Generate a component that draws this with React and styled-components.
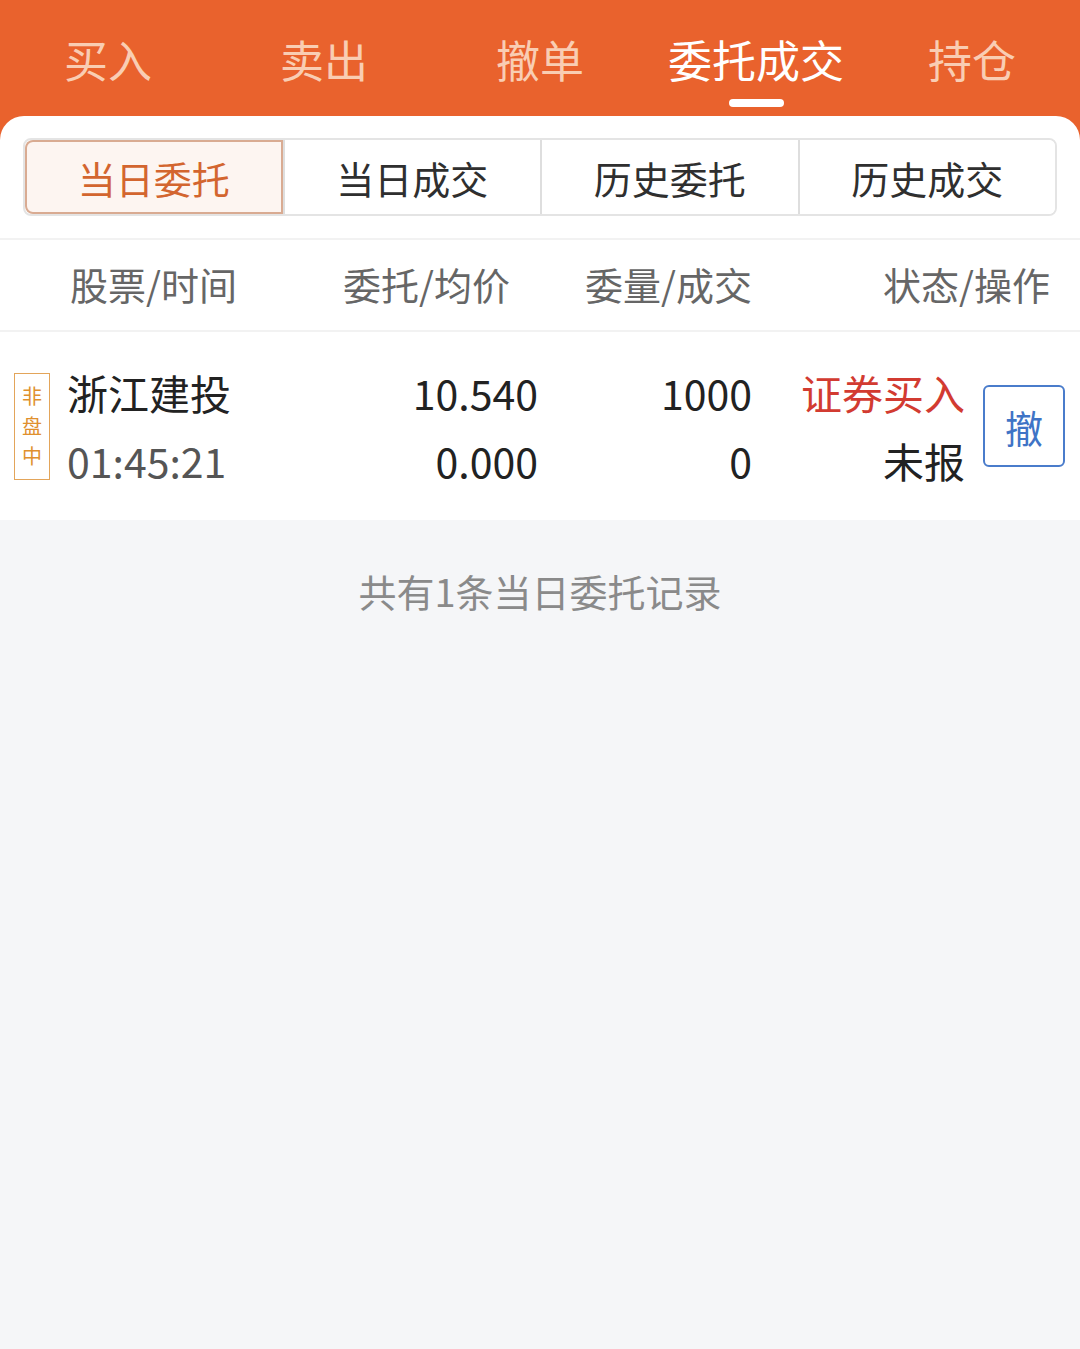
import React, { useState } from 'react';
import styled, { createGlobalStyle } from 'styled-components';

const GlobalStyle = createGlobalStyle`
  html, body {
    margin: 0;
    padding: 0;
    background: #f5f6f8;
    font-family: "Noto Sans CJK SC", "Noto Sans", sans-serif;
  }
`;

const topTabs = ['买入', '卖出', '撤单', '委托成交', '持仓'];
const subTabs = ['当日委托', '当日成交', '历史委托', '历史成交'];

const App = () => {
  const [tab, setTab] = useState(3);
  const [sub, setSub] = useState(0);

  return (
    <Page>
      <GlobalStyle />
      <TopBar>
        {topTabs.map((t, i) => (
          <TopTab key={t} $active={i === tab} onClick={() => setTab(i)}>
            {t}
          </TopTab>
        ))}
      </TopBar>
      <Card>
        <SegWrap>
          <Segmented>
            {subTabs.map((t, i) => (
              <Seg key={t} $active={i === sub} onClick={() => setSub(i)}>
                {t}
              </Seg>
            ))}
          </Segmented>
        </SegWrap>
        <HeadRow>
          <HeadCell $w="270px" $align="left" $pl="70px">股票/时间</HeadCell>
          <HeadCell $w="240px">委托/均价</HeadCell>
          <HeadCell $w="242px">委量/成交</HeadCell>
          <HeadCell $flex $pr="30px">状态/操作</HeadCell>
        </HeadRow>
        <DataRow>
          <Badge>
            <span>非</span>
            <span>盘</span>
            <span>中</span>
          </Badge>
          <Stack $pl="17px">
            <Name>浙江建投</Name>
            <Time>01:45:21</Time>
          </Stack>
          <Stack $right>
            <Num>10.540</Num>
            <Num>0.000</Num>
          </Stack>
          <Stack $right>
            <Num>1000</Num>
            <Num>0</Num>
          </Stack>
          <Stack $right>
            <Status $color="#d23b31">证券买入</Status>
            <Status>未报</Status>
          </Stack>
          <BtnCell>
            <CancelBtn>撤</CancelBtn>
          </BtnCell>
        </DataRow>
      </Card>
      <Footer>共有1条当日委托记录</Footer>
    </Page>
  );
};

export default App;

const Page = styled.div`
  width: 1080px;
  min-height: 1349px;
  background: #f5f6f8;
`;

const TopBar = styled.div`
  display: grid;
  grid-template-columns: repeat(5, 1fr);
  background: #e9622d;
  height: 140px;
  margin-bottom: -24px;
`;

const TopTab = styled.div`
  position: relative;
  text-align: center;
  font-size: 44px;
  line-height: 44px;
  padding-top: 37px;
  color: ${p => (p.$active ? '#ffffff' : '#f9cdb3')};
  cursor: pointer;

  &::after {
    content: '';
    display: ${p => (p.$active ? 'block' : 'none')};
    position: absolute;
    left: 50%;
    top: 99px;
    width: 55px;
    height: 8px;
    margin-left: -27px;
    border-radius: 4px;
    background: #ffffff;
  }
`;

const Card = styled.div`
  position: relative;
  background: #ffffff;
  border-radius: 24px 24px 0 0;
`;

const SegWrap = styled.div`
  padding: 22px 23px 22px;
  border-bottom: 2px solid #f2f2f2;
`;

const Segmented = styled.div`
  display: grid;
  grid-template-columns: repeat(4, 1fr);
  box-sizing: border-box;
  height: 78px;
  border: 2px solid #e4e4e4;
  border-radius: 8px;
  overflow: hidden;
`;

const Seg = styled.div`
  display: flex;
  align-items: center;
  justify-content: center;
  font-size: 38px;
  color: ${p => (p.$active ? '#d3652f' : '#2f2f2f')};
  background: ${p => (p.$active ? '#fdf5f1' : '#ffffff')};
  border-left: 2px solid ${p => (p.$active ? '#c99a80' : '#dedede')};
  box-shadow: ${p => (p.$active ? 'inset 0 0 0 2px #d9ab92' : 'none')};
  border-radius: ${p => (p.$active ? '8px 0 0 8px' : '0')};
  cursor: pointer;

  &:first-child {
    border-left: none;
  }
`;

const HeadRow = styled.div`
  display: flex;
  align-items: center;
  box-sizing: border-box;
  height: 92px;
  padding-bottom: 4px;
  border-bottom: 2px solid #f2f2f2;
`;

const HeadCell = styled.div`
  ${p => (p.$flex ? 'flex: 1;' : `width: ${p.$w};`)}
  box-sizing: border-box;
  padding-left: ${p => p.$pl || '0'};
  padding-right: ${p => p.$pr || '0'};
  text-align: ${p => p.$align || 'right'};
  font-size: 38px;
  color: #666666;
`;

const DataRow = styled.div`
  display: grid;
  grid-template-columns: 36px 230px 258px 214px 213px 100px;
  align-items: center;
  height: 188px;
  padding: 0 15px 0 14px;
`;

const Badge = styled.div`
  display: flex;
  flex-direction: column;
  align-items: center;
  justify-content: center;
  box-sizing: border-box;
  width: 36px;
  height: 107px;
  border: 1.5px solid #e3a55a;
  font-size: 20px;
  line-height: 30px;
  color: #e0902e;
`;

const Stack = styled.div`
  display: flex;
  flex-direction: column;
  align-items: ${p => (p.$right ? 'flex-end' : 'flex-start')};
  padding-left: ${p => p.$pl || '0'};
  gap: 8px;
  font-size: 41px;
  line-height: 60px;
`;

const Name = styled.div`
  color: #222222;
`;

const Time = styled.div`
  color: #555555;
`;

const Num = styled.div`
  color: #222222;
`;

const Status = styled.div`
  color: ${p => p.$color || '#222222'};
`;

const BtnCell = styled.div`
  display: flex;
  justify-content: flex-end;
`;

const CancelBtn = styled.div`
  display: flex;
  align-items: center;
  justify-content: center;
  box-sizing: border-box;
  width: 82px;
  height: 82px;
  border: 2px solid #4a7ccb;
  border-radius: 6px;
  font-size: 38px;
  color: #3f74c6;
`;

const Footer = styled.div`
  padding-top: 46px;
  text-align: center;
  font-size: 38px;
  line-height: 50px;
  color: #8a8a8a;
`;
